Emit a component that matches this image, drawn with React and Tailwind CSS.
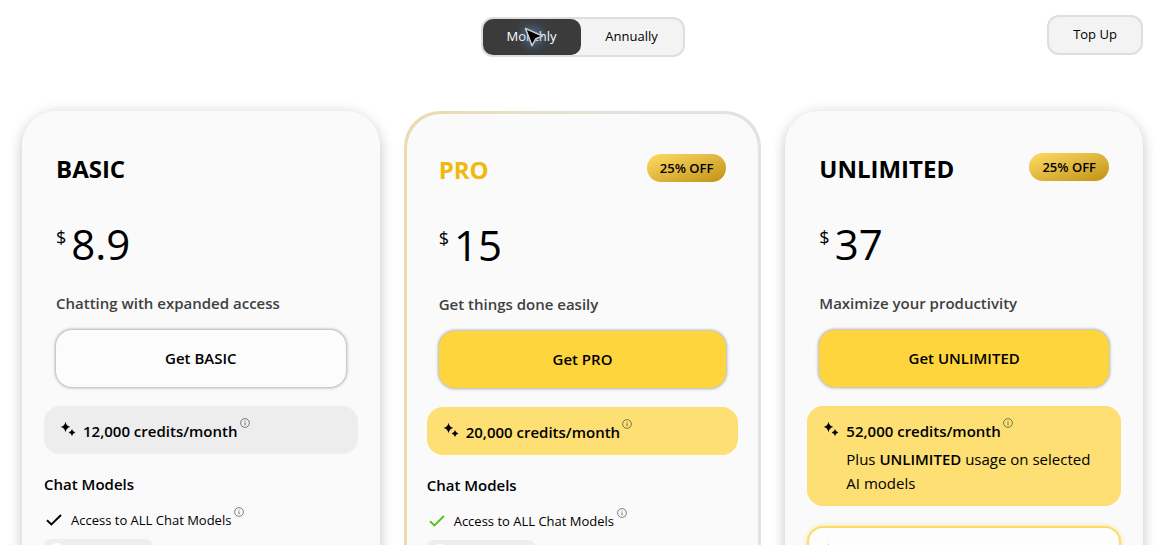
import React from "react";

function Sparkles() {
  return (
    <svg viewBox="0 0 16 16" className="size-4 shrink-0" fill="currentColor" aria-hidden="true">
      <path d="M5.5 0.8 Q6.3 5.2 10.4 6 Q6.3 6.8 5.5 11.2 Q4.7 6.8 0.6 6 Q4.7 5.2 5.5 0.8Z" />
      <path d="M12 8 Q12.7 11 15.4 11.5 Q12.7 12 12 15 Q11.3 12 8.6 11.5 Q11.3 11 12 8Z" />
    </svg>
  );
}

function Info() {
  return (
    <svg viewBox="0 0 10 10" className="-mt-px size-[10px] shrink-0 text-neutral-900/65" fill="none" stroke="currentColor" aria-hidden="true">
      <circle cx="5" cy="5" r="4.4" strokeWidth="0.8" />
      <path d="M5 4.4V7.4M5 2.6V3.5" strokeWidth="0.9" />
    </svg>
  );
}

function Check({ tone }) {
  return (
    <svg viewBox="0 0 16 12" className={`h-3 w-4 shrink-0 ${tone}`} fill="none" stroke="currentColor" strokeWidth="1.9" aria-hidden="true">
      <path d="M1 6.2L5.4 10.4L15 1" />
    </svg>
  );
}

function Cursor() {
  return (
    <svg
      viewBox="0 0 20 20"
      className="pointer-events-none absolute top-2 left-[41px] size-5 drop-shadow-[0_0_6px_#5b9cf0]"
      aria-hidden="true"
    >
      <path d="M1.5 1.5L18.5 9L11.8 11.8L8 18.6Z" fill="#000" stroke="#c8c8c8" strokeWidth="1.6" strokeLinejoin="round" />
      <path d="M3.4 3.4L15.6 8.9L10.6 10.6L7.9 15.6Z" fill="#000" />
    </svg>
  );
}

const plans = [
  { name: "BASIC", price: "8.9", tagline: "Chatting with expanded access", credits: "12,000" },
  { name: "PRO", price: "15", tagline: "Get things done easily", credits: "20,000", off: true, featured: true },
  { name: "UNLIMITED", price: "37", tagline: "Maximize your productivity", credits: "52,000", off: true, unlimited: true },
];

function Plan({ plan }) {
  const basic = !plan.off;
  const frame = plan.featured
    ? "bg-linear-to-r from-[#e9dcae] to-[#e2e2e2] to-70% p-[3px]"
    : "bg-[#fafafa] shadow-[0_3px_14px_rgba(0,0,0,0.24)]";
  const inset = plan.featured ? "px-5 pt-10" : "px-[22px] pt-[42px]";
  return (
    <article className={`rounded-[36px] ${frame}`}>
      <div className={`h-full rounded-[34px] bg-[#fafafa] pb-10 ${inset}`}>
        <div className="px-3">
          <header className="flex h-8 items-center justify-between">
            <h2 className={`text-2xl font-bold ${plan.featured ? "text-[#efb90f]" : "text-black"}`}>{plan.name}</h2>
            {plan.off && (
              <span className="-mt-1 rounded-full bg-linear-to-br from-[#ffdc62] to-[#c1920a] px-[13px] py-1 text-[13px] leading-5 font-semibold">
                25% OFF
              </span>
            )}
          </header>
          <p className="mt-8 flex h-14 gap-[5px]">
            <span className="pt-2 text-lg leading-6">$</span>
            <span className="text-[42px] leading-[54px]">{plan.price}</span>
          </p>
          <p className="mt-[18px] text-[15px] leading-6 font-semibold text-neutral-700">{plan.tagline}</p>
          <button
            type="button"
            className={`mt-[15px] h-[57px] w-full rounded-2xl text-[15px] font-semibold shadow-[0_0_3px_1px_rgba(0,0,0,0.3)] ${basic ? "bg-[#fcfcfc]" : "bg-[#ffd53d]"}`}
          >
            Get {plan.name}
          </button>
        </div>
        <div className={`mt-[19px] flex gap-[7px] rounded-2xl px-4 pt-[13px] pb-[11px] ${basic ? "bg-[#ededed]" : "bg-[#fddf74]"}`}>
          <div className="pt-0.5">
            <Sparkles />
          </div>
          <div>
            <p className="flex gap-0.5 text-[15px] leading-6 font-semibold">
              {plan.credits} credits/month
              <Info />
            </p>
            {plan.unlimited && (
              <p className="mt-1 pr-2 text-[15px] leading-6">
                Plus <strong className="font-semibold">UNLIMITED</strong> usage on selected AI models
              </p>
            )}
          </div>
        </div>
        {plan.unlimited ? (
          <div className="mt-5 h-24 rounded-2xl border-2 border-[#fbdb6b] bg-[#fdfdfd] px-3.5 py-3.5 text-[#f2c230] shadow-[0_0_5px_#fde384]">
            <Sparkles />
          </div>
        ) : (
          <section>
            <h3 className="mt-[18px] text-[15px] leading-6 font-semibold">Chat Models</h3>
            <p className="mt-3 flex items-center gap-[9px] pl-0.5 text-[13px] leading-6">
              <Check tone={basic ? "text-black" : "text-[#52c41a]"} />
              <span className="flex gap-[3px]">
                Access to ALL Chat Models
                <Info />
              </span>
            </p>
            <div className="mt-[7px] flex h-7 w-[108px] rounded-md bg-[#eeeeee] px-1.5 py-1">
              <span className="size-3.5 rounded-full bg-white" />
            </div>
          </section>
        )}
      </div>
    </article>
  );
}

export default function App() {
  return (
    <main className="h-screen overflow-hidden bg-white px-[22px] pt-[15px] font-['Open_Sans','Noto_Sans',sans-serif] text-black">
      <nav className="grid grid-cols-[1fr_auto_1fr] items-start text-[13px]">
        <div className="col-start-2 mt-0.5 flex rounded-xl border-2 border-[#dedede] bg-[#f3f3f3]">
          <button type="button" aria-pressed="true" className="relative h-9 w-[98px] rounded-[10px] bg-[#3b3b3b] text-white">
            Monthly
            <Cursor />
          </button>
          <button type="button" aria-pressed="false" className="h-9 w-[102px]">
            Annually
          </button>
        </div>
        <button type="button" className="h-10 w-24 justify-self-end rounded-xl border-2 border-[#dedede] bg-[#f3f3f3]">
          Top Up
        </button>
      </nav>
      <div className="mt-[54px] grid grid-cols-3 gap-6">
        {plans.map((plan) => (
          <Plan key={plan.name} plan={plan} />
        ))}
      </div>
    </main>
  );
}
